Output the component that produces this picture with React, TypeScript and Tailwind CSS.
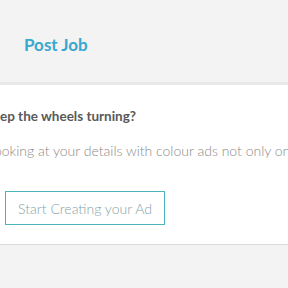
export default function App() {
  return (
    <div className="w-[288px] h-[288px] overflow-hidden bg-[#f3f3f3] font-['Lato',sans-serif]">
      <div className="h-[82px] pl-[24px] pt-[34px]">
        <h1 className="text-[17px] font-bold text-[#3aa7cf] leading-[22px]">Post Job</h1>
      </div>
      <div className="h-[163px] bg-white border-t-[3px] border-[#e8e8e8] border-b border-b-[#dcdcdc] overflow-hidden">
        <div className="pt-[22px] whitespace-nowrap">
          <h2 className="-ml-[16px] text-[13.5px] font-bold text-[#595959] leading-[18px]">Keep the wheels turning?</h2>
          <p className="-ml-[80px] mt-[17px] text-[14px] font-light text-[#8a8a8a] leading-[18px]">Get people looking at your details with colour ads not only on your profile</p>
        </div>
        <button className="mt-[31px] ml-[5px] w-[160px] h-[34px] border border-[#4fb3be] text-[14px] font-light text-[#86a3a8]">
          Start Creating your Ad
        </button>
      </div>
    </div>
  );
}
